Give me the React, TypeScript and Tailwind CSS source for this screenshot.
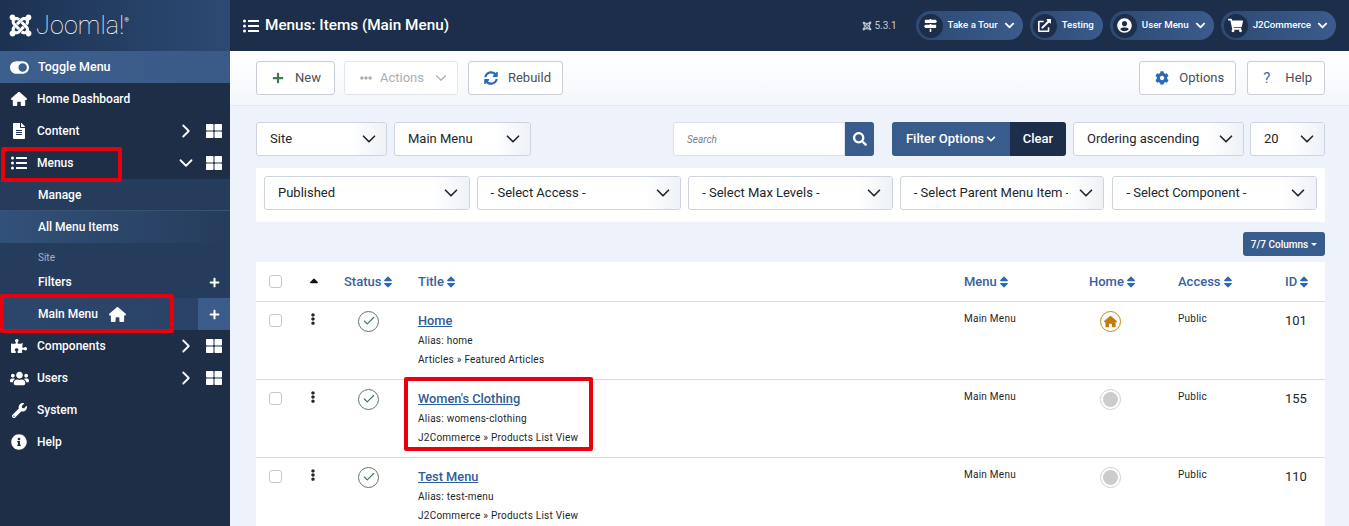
import React from "react";
import {
  FaJoomla, FaFileAlt, FaListUl, FaPuzzlePiece, FaUsers, FaWrench, FaInfoCircle, FaToggleOn, FaThLarge,
  FaChevronDown, FaMapSigns, FaExternalLinkAlt, FaUserCircle, FaShoppingCart, FaCog,
  FaPlus, FaEllipsisH, FaSyncAlt, FaSearch, FaEllipsisV, FaSort, FaSortUp,
} from "react-icons/fa";
import { FaHouse } from "react-icons/fa6";
import { ChevronRight, ChevronDown, Check } from "lucide-react";

function Nav({ icon, label, sub, open }: { icon: React.ReactNode; label: string; sub?: boolean; open?: boolean }) {
  return (
    <div className="h-8 flex items-center text-[12px] font-medium text-white">
      <span className="w-[37px] flex justify-center pl-[1px] text-[18px]">{icon}</span>
      <span>{label}</span>
      {sub && (
        <>
          <span className="ml-auto">{open ? <ChevronDown size={22} strokeWidth={2} /> : <ChevronRight size={22} strokeWidth={2} />}</span>
          <span className="ml-[9px] mr-2 text-[16px]"><FaThLarge /></span>
        </>
      )}
    </div>
  );
}

function TopPill({ icon, label, caret }: { icon: React.ReactNode; label: string; caret?: boolean }) {
  return (
    <div className="h-[29px] rounded-full bg-gradient-to-r from-[#2d4a72] to-[#3a5b8c] flex items-center text-[9.7px] font-medium text-white pr-[8px]">
      <span className="w-[24px] h-[24px] ml-[3px] rounded-full bg-[#1c2e4a] flex items-center justify-center text-[13px]">{icon}</span>
      <span className="ml-[5px]">{label}</span>
      {caret ? <FaChevronDown className="ml-[6px] text-[11px]" /> : <span className="w-[1px]" />}
    </div>
  );
}

function Btn({ icon, label, dim, caret, cls }: { icon: React.ReactNode; label: string; dim?: boolean; caret?: boolean; cls: string }) {
  return (
    <div className={"h-[34px] pl-[15px] rounded-[3px] border bg-white flex items-center text-[13px] " + cls + " " + (dim ? "border-[#e2e7ee] text-[#a9afb8]" : "border-[#c9ced6] text-[#495057]")}>
      {icon}
      <span>{label}</span>
      {caret && <ChevronDown size={18} strokeWidth={1.6} className="text-[#a9afb8]" />}
    </div>
  );
}

function Select({ label, className }: { label: string; className: string }) {
  return (
    <div className={"h-[34px] rounded-[3px] border border-[#cdd4de] bg-white flex items-center text-[13px] text-[#22262a] overflow-hidden " + className}>
      <span className="pl-[13px] pb-[1px] whitespace-nowrap flex-1 min-w-0">{label}</span>
      <span className="w-[35px] h-full shrink-0 bg-gradient-to-r from-white to-[#eef1f7] flex items-center justify-center text-[#22262a]"><ChevronDown size={22} strokeWidth={1.8} /></span>
    </div>
  );
}

function Sort({ label }: { label: string }) {
  return (
    <th className="font-medium text-left align-middle">
      <span className="inline-flex items-center text-[#3a5f9e] text-[13px]">{label}<FaSort className="text-[#2a69b8] text-[14px]" /></span>
    </th>
  );
}

function Row({ title, alias, type, home, id, box }: { title: string; alias: string; type: string; home?: boolean; id: string; box?: boolean }) {
  return (
    <tr className="border-t border-[#d9dde3] h-[78px] align-top">
      <td className="pl-[13px] pt-[12px]"><span className="block w-[13px] h-[13px] border border-[#c5c9cf] rounded-[3px]" /></td>
      <td className="pt-[11px]"><FaEllipsisV className="text-[12px] text-[#22262a] ml-[7px]" /></td>
      <td className="pt-[9px]">
        <span className="ml-[14px] w-[21px] h-[21px] rounded-full border border-[#5f7568] flex items-center justify-center text-[#3f7a50]"><Check size={14} strokeWidth={2} /></span>
      </td>
      <td className="relative pt-[10px]">
        <a className="block text-[12.8px] leading-[17px] font-medium text-[#2f5d96] underline">{title}</a>
        <div className="mt-[4px] text-[10px] leading-[16px] tracking-[0.25px] text-[#22262a]">Alias: {alias}</div>
        <div className="mt-[3px] text-[10px] leading-[16px] tracking-[0.25px] text-[#22262a]">{type}</div>
        {box && <span className="absolute left-[-14px] top-[-3px] w-[189px] h-[74px] border-[4px] border-[#e9000d] rounded-[2px]" />}
      </td>
      <td className="pt-[10px] text-[10px] leading-[14px] tracking-[0.25px] text-[#22262a]">Main Menu</td>
      <td className="pt-[9px]">
        {home ? (
          <span className="ml-[11px] w-[21px] h-[21px] rounded-full border border-[#c8880f] flex items-center justify-center text-[13px] text-[#c27c0e]"><FaHouse /></span>
        ) : (
          <span className="ml-[11px] w-[21px] h-[21px] rounded-full border border-[#cfcfcf] flex items-center justify-center"><span className="w-[15px] h-[15px] rounded-full bg-[#cccccc]" /></span>
        )}
      </td>
      <td className="pt-[10px] text-[10px] leading-[14px] tracking-[0.25px] text-[#22262a]">Public</td>
      <td className="pt-[10px] text-[13px] leading-[17px] text-[#22262a]">{id}</td>
    </tr>
  );
}

export default function App() {
  return (
    <div className="w-[1349px] h-[526px] overflow-hidden flex bg-[#eef3fb]" style={{ fontFamily: "Roboto, sans-serif" }}>
      <aside className="w-[230px] shrink-0 bg-[#1e2e47] flex flex-col">
        <div className="h-[51px] flex items-center pl-[8px] gap-[3px] text-white bg-gradient-to-r from-[#1c3253] to-[#2d4a73]">
          <FaJoomla className="text-[25px]" />
          <span className="text-[25px] font-thin tracking-[0.2px]">Joomla!</span>
          <span className="text-[6px] -ml-[3px] mb-[12px]">®</span>
        </div>
        <div className="h-[32px] flex items-center text-[12.5px] font-medium text-white bg-gradient-to-r from-[#3c5f8e] to-[#3a5a87]">
          <span className="w-[38px] flex justify-center text-[19px]"><FaToggleOn /></span>
          <span>Toggle Menu</span>
        </div>
        <Nav icon={<FaHouse className="text-[16px]" />} label="Home Dashboard" />
        <Nav icon={<FaFileAlt className="text-[16px]" />} label="Content" sub />
        <div className="relative">
          <Nav icon={<FaListUl className="text-[16px]" />} label="Menus" sub open />
          <span className="absolute left-[1px] top-0 w-[121px] h-[35px] border-[4px] border-[#e9000d] rounded-[2px]" />
        </div>
        <div className="bg-[#263c5c] text-[12px] font-medium text-white">
          <div className="h-8 flex items-center pl-[38px] border-b border-[#3a5272]">Manage</div>
          <div className="h-8 flex items-center pl-[38px] bg-gradient-to-r from-[#32517a] to-[#263c5c]">All Menu Items</div>
          <div className="h-[23px] pt-[9px] pl-[38px] text-[10px] leading-[12px] font-normal text-[#a5b3c7]">Site</div>
          <div className="h-8 flex items-center pl-[38px] pr-[10px] justify-between">
            <span>Filters</span><FaPlus className="text-[11px]" />
          </div>
          <div className="relative h-8 flex items-center pl-[38px] bg-gradient-to-r from-[#2c466b] to-[#2a4266]">
            <span>Main Menu</span>
            <FaHouse className="ml-[11px] text-[17px]" />
            <span className="ml-auto w-[32px] h-full bg-[#3b5c8a] flex items-center justify-center"><FaPlus className="text-[11px]" /></span>
            <span className="absolute left-0 top-[-4px] w-[174px] h-[39px] border-[4px] border-[#e9000d] rounded-[2px]" />
          </div>
        </div>
        <Nav icon={<FaPuzzlePiece className="text-[16px]" />} label="Components" sub />
        <Nav icon={<FaUsers className="text-[19px]" />} label="Users" sub />
        <Nav icon={<FaWrench className="text-[15px]" />} label="System" />
        <Nav icon={<FaInfoCircle className="text-[16px]" />} label="Help" />
      </aside>

      <main className="flex-1 min-w-0 flex flex-col">
        <header className="h-[51px] shrink-0 bg-[#1c2e4a] flex items-center text-white pl-[13px] pr-[13px]">
          <FaListUl className="text-[16px]" />
          <h1 className="ml-[6px] text-[15.3px] font-medium">Menus: Items (Main Menu)</h1>
          <div className="ml-auto flex items-center gap-[7px]">
            <span className="mr-[12px] flex items-center gap-[2px] text-[10px] text-[#c3cbd7]"><FaJoomla className="text-[10px]" />5.3.1</span>
            <TopPill icon={<FaMapSigns />} label="Take a Tour" caret />
            <TopPill icon={<FaExternalLinkAlt />} label="Testing" />
            <TopPill icon={<FaUserCircle className="text-[15px]" />} label="User Menu" caret />
            <TopPill icon={<FaShoppingCart className="text-[15px]" />} label="J2Commerce" caret />
          </div>
        </header>

        <div className="h-[55px] shrink-0 bg-gradient-to-b from-white to-[#f4f7fb] border-b border-[#e6eaf0] flex items-center pl-[26px] pr-[24px] gap-[10px]">
          <Btn cls="gap-[11px] pr-[13px]" icon={<FaPlus className="text-[12px] text-[#3f7a50]" />} label="New" />
          <Btn cls="gap-[8px] pr-[7px] -ml-[1px]" dim icon={<FaEllipsisH className="text-[12px]" />} label="Actions" caret />
          <Btn cls="gap-[10px] pr-[11px]" icon={<FaSyncAlt className="text-[14px] text-[#2a69b8]" />} label="Rebuild" />
          <div className="ml-auto" />
          <Btn cls="gap-[10px] pr-[11px]" icon={<FaCog className="text-[14px] text-[#2a69b8]" />} label="Options" />
          <Btn cls="gap-[15px] pr-[12px] ml-[1px]" icon={<span className="text-[15px] leading-none text-[#3a6ea8]">?</span>} label="Help" />
        </div>

        <div className="pl-[26px] pr-[24px] pt-[16px]">
          <div className="flex items-center gap-[7px]">
            <Select label="Site" className="w-[131px]" />
            <Select label="Main Menu" className="w-[137px]" />
            <div className="ml-auto flex items-center">
              <div className="w-[172px] h-[34px] bg-white border border-[#dde2ea] rounded-l-[3px] flex items-center pl-[13px] text-[10px] italic text-[#777f8a]">Search</div>
              <div className="w-[29px] h-[34px] bg-[#385d8d] rounded-r-[3px] flex items-center justify-center text-white text-[14px]"><FaSearch /></div>
            </div>
            <div className="flex h-[34px] text-[13px] font-medium text-white rounded-[3px] overflow-hidden ml-[11px]">
              <div className="w-[118px] bg-[#385d8d] flex items-center justify-center gap-[2px] pb-[1px]">Filter Options<FaChevronDown className="text-[10px]" /></div>
              <div className="w-[56px] bg-[#1c2e4a] flex items-center justify-center pb-[1px]">Clear</div>
            </div>
            <Select label="Ordering ascending" className="w-[171px] -mr-[1px]" />
            <Select label="20" className="w-[75px]" />
          </div>

          <div className="mt-[12px] h-[54px] bg-white flex items-start pt-[8px] gap-[7px] px-[8px]">
            <Select label="Published" className="w-[206px]" />
            <Select label="- Select Access -" className="w-[205px]" />
            <Select label="- Select Max Levels -" className="w-[205px]" />
            <Select label="- Select Parent Menu Item -" className="w-[205px]" />
            <Select label="- Select Component -" className="w-[205px] ml-[1px]" />
          </div>

          <div className="mt-[10px] flex justify-end">
            <div className="h-[24px] w-[82px] rounded-[3px] bg-[#385d8d] text-white text-[10px] font-medium flex items-center justify-center gap-[3px]">
              7/7 Columns<span className="w-0 h-0 border-x-[3px] border-x-transparent border-t-[3px] border-t-white" />
            </div>
          </div>

          <table className="mt-[6px] w-full bg-white table-fixed">
            <colgroup>
              <col className="w-[44px]" /><col className="w-[44px]" /><col className="w-[74px]" /><col className="w-[546px]" />
              <col className="w-[125px]" /><col className="w-[89px]" /><col className="w-[107px]" /><col />
            </colgroup>
            <thead>
              <tr className="h-[39px]">
                <th className="pl-[13px] align-middle"><span className="block w-[13px] h-[13px] border border-[#c5c9cf] rounded-[3px]" /></th>
                <th className="align-middle"><FaSortUp className="text-[14px] text-[#111] ml-[7px] mt-[5px]" /></th>
                <Sort label="Status" />
                <Sort label="Title" />
                <Sort label="Menu" />
                <Sort label="Home" />
                <Sort label="Access" />
                <Sort label="ID" />
              </tr>
            </thead>
            <tbody>
              <Row title="Home" alias="home" type="Articles » Featured Articles" home id="101" />
              <Row title="Women's Clothing" alias="womens-clothing" type="J2Commerce » Products List View" id="155" box />
              <Row title="Test Menu" alias="test-menu" type="J2Commerce » Products List View" id="110" />
            </tbody>
          </table>
        </div>
      </main>
    </div>
  );
}
